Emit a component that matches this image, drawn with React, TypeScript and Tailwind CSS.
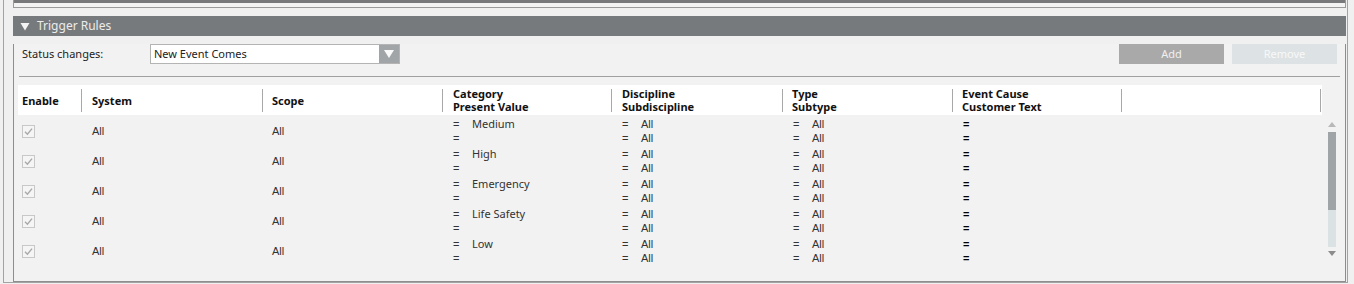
import React from 'react';

const rows = ['Medium', 'High', 'Emergency', 'Life Safety', 'Low'];

const columns = [
  { id: 'enable', w: 'w-[64px]', pl: 'pl-[4px]', top: 'Enable', bottom: '' },
  { id: 'system', w: 'w-[181px]', pl: 'pl-[10px]', top: 'System', bottom: '' },
  { id: 'scope', w: 'w-[180px]', pl: 'pl-[9px]', top: 'Scope', bottom: '' },
  { id: 'category', w: 'w-[169px]', pl: 'pl-[10px]', top: 'Category', bottom: 'Present Value' },
  { id: 'discipline', w: 'w-[171px]', pl: 'pl-[10px]', top: 'Discipline', bottom: 'Subdiscipline' },
  { id: 'type', w: 'w-[170px]', pl: 'pl-[9px]', top: 'Type', bottom: 'Subtype' },
  { id: 'event', w: 'w-[169px]', pl: 'pl-[9px]', top: 'Event Cause', bottom: 'Customer Text' },
  { id: 'blank', w: 'w-[199px]', pl: 'pl-[9px]', top: '', bottom: '' }
];

function CheckBox() {
  return (
    <div className="w-[13px] h-[13px] border border-[#c8c8c8] bg-[#f5f5f5] flex items-center justify-center">
      <svg width="9" height="9" viewBox="0 0 9 9">
        <path d="M1 4.8 L3.4 7.2 L8 1.6" stroke="#a9a9a9" strokeWidth="1.4" fill="none" />
      </svg>
    </div>
  );
}

function PairCell({ first, second, width }: { first: string; second: string; width: string }) {
  return (
    <div className={`${width} pl-[10px] flex flex-col pt-[1px] font-['Liberation_Sans',sans-serif] text-[11px] text-[#333]`}>
      <div className="h-[14px] flex items-center">
        <span className="w-[19px]">=</span>
        <span>{first}</span>
      </div>
      <div className="h-[14px] flex items-center">
        <span className="w-[19px]">=</span>
        <span>{second}</span>
      </div>
    </div>
  );
}

export default function App() {
  return (
    <div className="w-[1354px] h-[284px] bg-[#f0f0f0] overflow-hidden font-['Noto_Sans',sans-serif]">
      <div className="ml-[3px] w-[1345px] h-[283px] border-l border-r border-b border-[#a3a3a3] pl-[9px] pr-[1px]">
        {/* tail of the panel above */}
        <div className="h-[8px] border-l border-r border-b border-[#9a9a9a] bg-[#f3f3f3]">
          <div className="h-[3px] bg-[#77797b]" />
        </div>

        {/* Trigger Rules section */}
        <div className="mt-[8px]">
          <div className="h-[20px] bg-[#777a7c] flex items-center pl-[7px] text-[12px] text-[#ececec]">
            <svg width="10" height="9" viewBox="0 0 10 9" className="mr-[7px]">
              <path d="M0.5 1 H9.5 L5 8.5 Z" fill="#f4f4f4" />
            </svg>
            <span>Trigger Rules</span>
          </div>

          <div className="h-[238px] border-l border-r border-b border-[#8e8e8e] bg-[#f2f2f2] px-[4px]">
            {/* status row */}
            <div className="mt-[8px] h-[20px] flex items-center">
              <span className="w-[132px] pl-[4px] text-[11px] text-[#222]">Status changes:</span>
              <div className="w-[250px] h-[20px] border border-[#b4b4b4] bg-white flex">
                <span className="flex-1 pl-[3px] text-[11px] text-[#222] leading-[18px]">New Event Comes</span>
                <div className="w-[20px] h-full bg-[#a2a5a7] flex items-center justify-center">
                  <svg width="10" height="8" viewBox="0 0 10 8">
                    <path d="M0 0 H10 L5 8 Z" fill="#fafafa" />
                  </svg>
                </div>
              </div>
              <div className="flex-1" />
              <button className="w-[105px] h-[20px] bg-[#a9a9a9] text-[11px] text-[#f0f0f0]">Add</button>
              <button className="ml-[8px] mr-[4px] w-[105px] h-[20px] bg-[#dde3e5] text-[11px] text-[#f8f8f8]">Remove</button>
            </div>

            <div className="mt-[12px] mx-[1px] border-t border-[#a0a0a0]" />

            {/* header */}
            <div className="mt-[8px] flex">
              <div className="w-[1304px] h-[30px] bg-white flex text-[11px] font-bold text-[#111] leading-[13px]">
                {columns.map((c) => (
                  <div key={c.id} className={`${c.w} flex items-center`}>
                    <div className={`flex-1 ${c.pl}`}>
                      <div>{c.top}</div>
                      {c.bottom && <div>{c.bottom}</div>}
                    </div>
                    <div className="w-px h-[23px] bg-[#a8a8a8]" />
                  </div>
                ))}
              </div>
            </div>

            {/* body rows + scrollbar */}
            <div className="flex mt-[1px]">
              <div className="w-[1304px] flex flex-col">
                {rows.map((value, i) => (
                  <div key={i} className="h-[30px] flex">
                    <div className="w-[64px] pl-[4px] flex items-center">
                      <CheckBox />
                    </div>
                    <div className="w-[181px] pl-[10px] flex items-center font-['Liberation_Sans',sans-serif] text-[11px] text-[#333]">All</div>
                    <div className="w-[180px] pl-[9px] flex items-center font-['Liberation_Sans',sans-serif] text-[11px] text-[#333]">All</div>
                    <div className="w-[169px] pl-[10px] flex flex-col pt-[1px] text-[11px] text-[#333]">
                      <div className="h-[14px] flex items-center">
                        <span className="w-[19px] font-['Liberation_Sans',sans-serif]">=</span>
                        <span>{value}</span>
                      </div>
                      <div className="h-[14px] flex items-center">
                        <span className="w-[19px] font-['Liberation_Sans',sans-serif]">=</span>
                      </div>
                    </div>
                    <PairCell first="All" second="All" width="w-[171px]" />
                    <PairCell first="All" second="All" width="w-[170px]" />
                    <div className="w-[169px] pl-[10px] flex flex-col pt-[1px] text-[11px] font-bold text-black font-['Liberation_Sans',sans-serif]">
                      <div className="h-[14px] flex items-center">=</div>
                      <div className="h-[14px] flex items-center">=</div>
                    </div>
                  </div>
                ))}
              </div>

              {/* scrollbar */}
              <div className="w-[18px] pl-[6px] flex flex-col items-start pt-[6px]">
                <svg width="8" height="5" viewBox="0 0 8 5">
                  <path d="M0 5 L4 0 L8 5 Z" fill="#b8b8b8" />
                </svg>
                <div className="mt-[5px] w-[8px] h-[78px] bg-[#9fa4a6]" />
                <div className="w-[8px] h-[37px] bg-[#dbe2e3]" />
                <svg width="8" height="5" viewBox="0 0 8 5" className="mt-[4px]">
                  <path d="M0 0 L8 0 L4 5 Z" fill="#8c8c8c" />
                </svg>
              </div>
            </div>
          </div>
        </div>
      </div>
    </div>
  );
}
